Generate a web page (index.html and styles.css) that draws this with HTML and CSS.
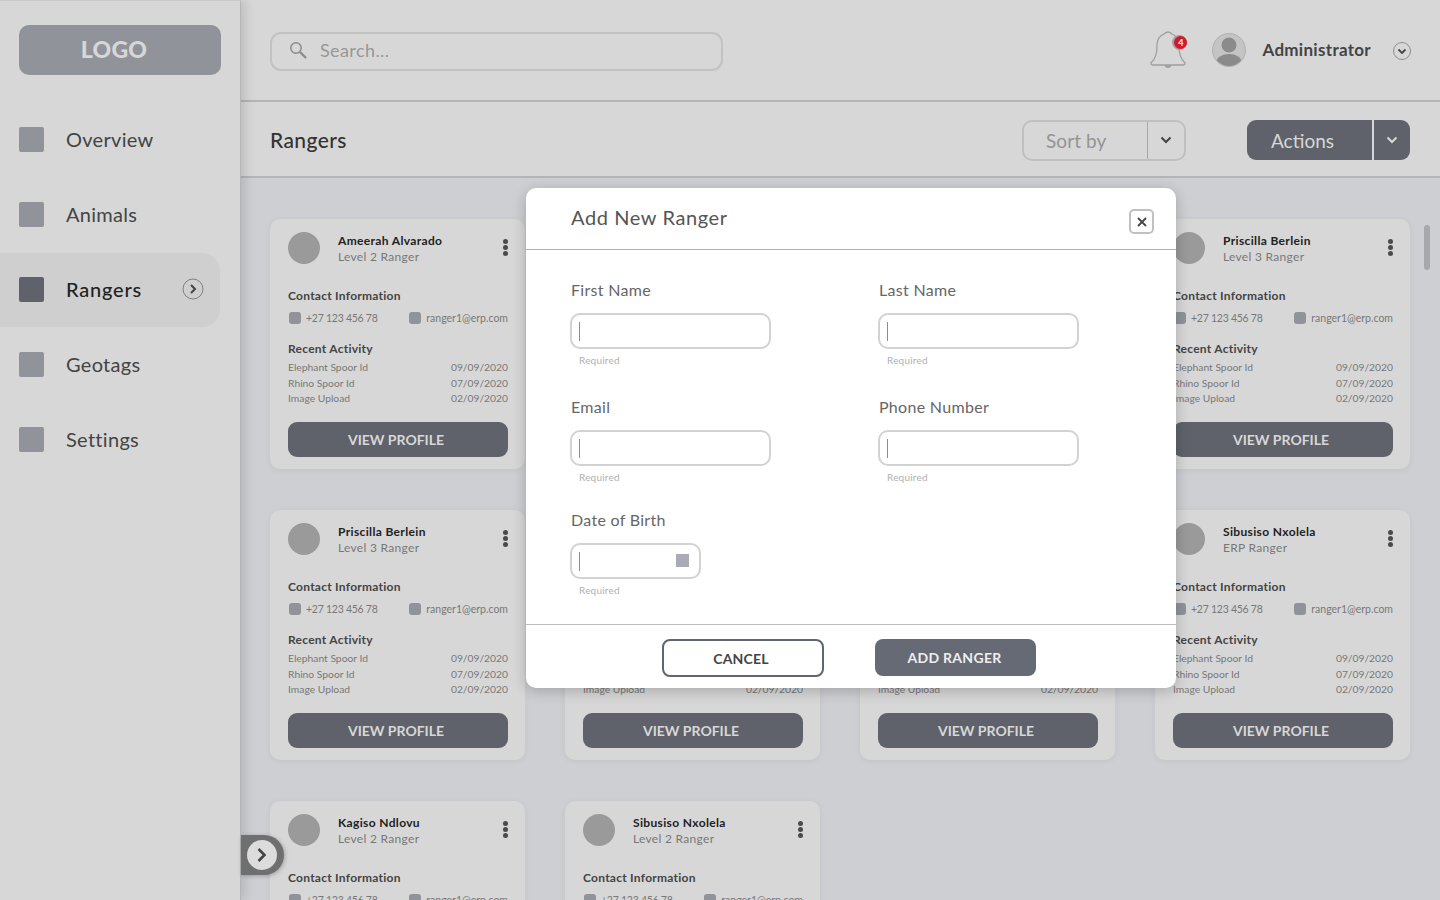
FILE: index.html
```html
<!DOCTYPE html>
<html lang="en">
  <head>
    <meta charset="UTF-8" />
    <meta name="viewport" content="width=device-width, initial-scale=1.0" />
    <title>Rangers</title>
    <link rel="stylesheet" href="styles.css">
  </head>
  <body>
    <aside class="sidebar">
      <div class="logo">LOGO</div>
      <nav class="nav">
        <a class="nav-item"><span class="nav-icon"></span>Overview</a>
        <a class="nav-item"><span class="nav-icon"></span>Animals</a>
        <a class="nav-item active"><span class="nav-icon"></span>Rangers
          <svg class="nav-arrow" viewBox="0 0 22 22" width="22" height="22"><circle cx="11" cy="11" r="10" fill="none" stroke="#808080" stroke-width="1"/><path d="M9 7l4 4-4 4" fill="none" stroke="#444" stroke-width="2"/></svg>
        </a>
        <a class="nav-item"><span class="nav-icon"></span>Geotags</a>
        <a class="nav-item"><span class="nav-icon"></span>Settings</a>
      </nav>
    </aside>

    <div class="main">
      <header class="topbar">
        <div class="search">
          <svg viewBox="0 0 18 18" width="18" height="18"><circle cx="7" cy="7" r="5.2" fill="none" stroke="#8a8a8a" stroke-width="1.5"/><path d="M11 11l6 6" stroke="#8a8a8a" stroke-width="2.4"/></svg>
          <span>Search...</span>
        </div>
        <div class="bell">
          <svg viewBox="0 0 36 40" width="36" height="40"><path d="M18 1c2 0 3 1 4 2 5 2 7 6 7 11 0 8 1 13 6 18 0 2-1 2-2 2H3c-1 0-2 0-2-2 5-5 6-10 6-18 0-5 2-9 7-11 1-1 2-2 4-2z" fill="none" stroke="#a0a0a0" stroke-width="1.3"/><path d="M14.500 34h7c0 4-7 4-7 0z" fill="#a0a0a0"/></svg>
          <span class="badge">4</span>
        </div>
        <svg class="user-pic" viewBox="0 0 34 34" width="34" height="34"><defs><clipPath id="userClip"><circle cx="17" cy="17" r="16"/></clipPath></defs><circle cx="17" cy="17" r="16.500" fill="#c4c4c4" stroke="#b0b0b0"/><g clip-path="url(#userClip)" fill="#8b8b8b"><circle cx="17" cy="12" r="7.500"/><ellipse cx="17" cy="29" rx="12.500" ry="8"/></g></svg>
        <span class="user-name">Administrator</span>
        <svg class="user-arrow" viewBox="0 0 18 18" width="18" height="18"><circle cx="9" cy="9" r="8.500" fill="none" stroke="#8f8f8f"/><path d="M5.500 7.500L9 11l3.500-3.500" fill="none" stroke="#444" stroke-width="1.800"/></svg>
      </header>

      <div class="subbar">
        <h1>Rangers</h1>
        <div class="sort">
          <span class="sort-label">Sort by</span>
          <span class="sort-arrow"><svg viewBox="0 0 12 8" width="12" height="8"><path d="M1.500 1.500L6 6l4.500-4.500" fill="none" stroke="#444" stroke-width="2"/></svg></span>
        </div>
        <div class="actions">
          <span class="actions-label">Actions</span>
          <span class="actions-arrow"><svg viewBox="0 0 12 8" width="12" height="8"><path d="M1.500 1.500L6 6l4.500-4.500" fill="none" stroke="#d7d7d7" stroke-width="2"/></svg></span>
        </div>
      </div>

      <div class="content">
        <div class="grid">
          <div class="card">
            <div class="card-top"><span class="avatar"></span><div class="who"><strong>Ameerah Alvarado</strong><span>Level 2 Ranger</span></div><span class="kebab"><i></i><i></i><i></i></span></div>
            <h3>Contact Information</h3>
            <div class="contact"><span><i></i>+27 123 456 78</span><span><i></i>ranger1@erp.com</span></div>
            <h3 class="recent">Recent Activity</h3>
            <div class="activity"><p><span>Elephant Spoor Id</span><span>09/09/2020</span></p><p><span>Rhino Spoor Id</span><span>07/09/2020</span></p><p><span>Image Upload</span><span>02/09/2020</span></p></div>
            <button class="view">VIEW PROFILE</button>
          </div>
          <div class="card">
            <div class="card-top"><span class="avatar"></span><div class="who"><strong>Kagiso Ndlovu</strong><span>Level 2 Ranger</span></div><span class="kebab"><i></i><i></i><i></i></span></div>
            <h3>Contact Information</h3>
            <div class="contact"><span><i></i>+27 123 456 78</span><span><i></i>ranger1@erp.com</span></div>
            <h3 class="recent">Recent Activity</h3>
            <div class="activity"><p><span>Elephant Spoor Id</span><span>09/09/2020</span></p><p><span>Rhino Spoor Id</span><span>07/09/2020</span></p><p><span>Image Upload</span><span>02/09/2020</span></p></div>
            <button class="view">VIEW PROFILE</button>
          </div>
          <div class="card">
            <div class="card-top"><span class="avatar"></span><div class="who"><strong>Sibusiso Nxolela</strong><span>Level 2 Ranger</span></div><span class="kebab"><i></i><i></i><i></i></span></div>
            <h3>Contact Information</h3>
            <div class="contact"><span><i></i>+27 123 456 78</span><span><i></i>ranger1@erp.com</span></div>
            <h3 class="recent">Recent Activity</h3>
            <div class="activity"><p><span>Elephant Spoor Id</span><span>09/09/2020</span></p><p><span>Rhino Spoor Id</span><span>07/09/2020</span></p><p><span>Image Upload</span><span>02/09/2020</span></p></div>
            <button class="view">VIEW PROFILE</button>
          </div>
          <div class="card">
            <div class="card-top"><span class="avatar"></span><div class="who"><strong>Priscilla Berlein</strong><span>Level 3 Ranger</span></div><span class="kebab"><i></i><i></i><i></i></span></div>
            <h3>Contact Information</h3>
            <div class="contact"><span><i></i>+27 123 456 78</span><span><i></i>ranger1@erp.com</span></div>
            <h3 class="recent">Recent Activity</h3>
            <div class="activity"><p><span>Elephant Spoor Id</span><span>09/09/2020</span></p><p><span>Rhino Spoor Id</span><span>07/09/2020</span></p><p><span>Image Upload</span><span>02/09/2020</span></p></div>
            <button class="view">VIEW PROFILE</button>
          </div>
          <div class="card">
            <div class="card-top"><span class="avatar"></span><div class="who"><strong>Priscilla Berlein</strong><span>Level 3 Ranger</span></div><span class="kebab"><i></i><i></i><i></i></span></div>
            <h3>Contact Information</h3>
            <div class="contact"><span><i></i>+27 123 456 78</span><span><i></i>ranger1@erp.com</span></div>
            <h3 class="recent">Recent Activity</h3>
            <div class="activity"><p><span>Elephant Spoor Id</span><span>09/09/2020</span></p><p><span>Rhino Spoor Id</span><span>07/09/2020</span></p><p><span>Image Upload</span><span>02/09/2020</span></p></div>
            <button class="view">VIEW PROFILE</button>
          </div>
          <div class="card">
            <div class="card-top"><span class="avatar"></span><div class="who"><strong>Ameerah Alvarado</strong><span>Level 2 Ranger</span></div><span class="kebab"><i></i><i></i><i></i></span></div>
            <h3>Contact Information</h3>
            <div class="contact"><span><i></i>+27 123 456 78</span><span><i></i>ranger1@erp.com</span></div>
            <h3 class="recent">Recent Activity</h3>
            <div class="activity"><p><span>Elephant Spoor Id</span><span>09/09/2020</span></p><p><span>Rhino Spoor Id</span><span>07/09/2020</span></p><p><span>Image Upload</span><span>02/09/2020</span></p></div>
            <button class="view">VIEW PROFILE</button>
          </div>
          <div class="card">
            <div class="card-top"><span class="avatar"></span><div class="who"><strong>Kagiso Ndlovu</strong><span>Level 2 Ranger</span></div><span class="kebab"><i></i><i></i><i></i></span></div>
            <h3>Contact Information</h3>
            <div class="contact"><span><i></i>+27 123 456 78</span><span><i></i>ranger1@erp.com</span></div>
            <h3 class="recent">Recent Activity</h3>
            <div class="activity"><p><span>Elephant Spoor Id</span><span>09/09/2020</span></p><p><span>Rhino Spoor Id</span><span>07/09/2020</span></p><p><span>Image Upload</span><span>02/09/2020</span></p></div>
            <button class="view">VIEW PROFILE</button>
          </div>
          <div class="card">
            <div class="card-top"><span class="avatar"></span><div class="who"><strong>Sibusiso Nxolela</strong><span>ERP Ranger</span></div><span class="kebab"><i></i><i></i><i></i></span></div>
            <h3>Contact Information</h3>
            <div class="contact"><span><i></i>+27 123 456 78</span><span><i></i>ranger1@erp.com</span></div>
            <h3 class="recent">Recent Activity</h3>
            <div class="activity"><p><span>Elephant Spoor Id</span><span>09/09/2020</span></p><p><span>Rhino Spoor Id</span><span>07/09/2020</span></p><p><span>Image Upload</span><span>02/09/2020</span></p></div>
            <button class="view">VIEW PROFILE</button>
          </div>
          <div class="card">
            <div class="card-top"><span class="avatar"></span><div class="who"><strong>Kagiso Ndlovu</strong><span>Level 2 Ranger</span></div><span class="kebab"><i></i><i></i><i></i></span></div>
            <h3>Contact Information</h3>
            <div class="contact"><span><i></i>+27 123 456 78</span><span><i></i>ranger1@erp.com</span></div>
          </div>
          <div class="card">
            <div class="card-top"><span class="avatar"></span><div class="who"><strong>Sibusiso Nxolela</strong><span>Level 2 Ranger</span></div><span class="kebab"><i></i><i></i><i></i></span></div>
            <h3>Contact Information</h3>
            <div class="contact"><span><i></i>+27 123 456 78</span><span><i></i>ranger1@erp.com</span></div>
          </div>
        </div>
      </div>
    </div>

    <div class="scroll-thumb"></div>

    <!-- sidebar collapse handle -->
    <div class="collapse">
      <span><svg viewBox="0 0 12 16" width="12" height="16"><path d="M2.500 2l6 6-6 6" fill="none" stroke="#444" stroke-width="2.600"/></svg></span>
    </div>

    <div class="modal">
      <div class="modal-head">
        <h2>Add New Ranger</h2>
        <span class="close"><svg viewBox="0 0 10 10" width="10" height="10"><path d="M1 1l8 8M9 1l-8 8" stroke="#444" stroke-width="1.800"/></svg></span>
      </div>
      <div class="modal-body">
        <div class="field">
          <label>First Name</label>
          <div class="input"></div>
          <small>Required</small>
        </div>
        <div class="field">
          <label>Last Name</label>
          <div class="input"></div>
          <small>Required</small>
        </div>
        <div class="field">
          <label>Email</label>
          <div class="input"></div>
          <small>Required</small>
        </div>
        <div class="field">
          <label>Phone Number</label>
          <div class="input"></div>
          <small>Required</small>
        </div>
        <div class="field dob">
          <label>Date of Birth</label>
          <div class="input date"><span class="cal"></span></div>
          <small>Required</small>
        </div>
      </div>
      <div class="modal-foot">
        <button class="cancel">CANCEL</button>
        <button class="add">ADD RANGER</button>
      </div>
    </div>
  </body>
</html>
```

FILE: styles.css
```css
:root {
  --panel: #d7d7d7;
  --bg: #cdcfd3;
  --line: #b4b5b6;
  --dark: #5f626a;
  --square: #90939a;
}

* {
  box-sizing: border-box;
}

body {
  margin: 0;
  height: 900px;
  overflow: hidden;
  display: flex;
  background: var(--bg);
  color: #333;
  font-family: "Lato", "Noto Sans", sans-serif;
}

/* sidebar */
.sidebar {
  width: 241px;
  flex-shrink: 0;
  background: var(--panel);
  border-top: 1px solid #c8c8c8;
  border-right: 1px solid var(--line);
  padding-top: 24px;
  box-shadow: 4px 0 10px rgba(0, 0, 0, 0.12);
  position: relative;
  z-index: 2;
}

.logo {
  width: 202px;
  height: 50px;
  margin-left: 19px;
  padding: 0 12px 2px 0;
  display: flex;
  align-items: center;
  justify-content: center;
  background: var(--square);
  border-radius: 10px;
  color: #d7d7d7;
  font-size: 23px;
  font-weight: 900;
  letter-spacing: 0.3px;
}

.nav {
  margin-top: 28px;
  display: flex;
  flex-direction: column;
  gap: 1px;
}

.nav-item {
  width: 220px;
  height: 74px;
  display: flex;
  align-items: center;
  padding: 0 0 2px 19px;
  font-size: 20px;
  letter-spacing: 0.3px;
  color: #444;
  border-radius: 0 18px 18px 0;
}

.nav-icon {
  width: 25px;
  height: 25px;
  margin-right: 22px;
  background: var(--square);
  border-radius: 2px;
}

.nav-item.active {
  background: #cfcfcf;
  color: #222;
  font-weight: 500;
  letter-spacing: 0.8px;
}

.nav-item.active .nav-icon {
  background: var(--dark);
}

.nav-arrow {
  margin-left: auto;
  margin-right: 16px;
}

/* main */
.main {
  flex: 1;
  min-width: 0;
}

.topbar {
  height: 102px;
  background: var(--panel);
  border-bottom: 2px solid var(--line);
  display: flex;
  align-items: center;
  padding: 2px 29px 0 29px;
}

.search {
  width: 453px;
  height: 39px;
  display: flex;
  align-items: center;
  gap: 13px;
  padding: 0 0 3px 17px;
  border: 2px solid #c2c2c2;
  border-radius: 11px;
  color: #979797;
  font-size: 18px;
  letter-spacing: 0.4px;
}

.bell {
  position: relative;
  margin-left: auto;
  margin-right: 26px;
  height: 40px;
}

.badge {
  position: absolute;
  top: 5px;
  right: -1px;
  width: 13px;
  height: 13px;
  border-radius: 50%;
  background: #d3182b;
  box-shadow: -1px 0 0 1px #a0a0a0;
  color: #e8e8e8;
  font-size: 9px;
  font-weight: 900;
  line-height: 13px;
  text-align: center;
}

.user-pic {
  margin-top: -3px;
}

.user-name {
  margin: -3px 0 0 16px;
  font-size: 17px;
  font-weight: 700;
  color: #444;
  letter-spacing: 0.3px;
}

.user-arrow {
  margin-left: 22px;
}

.subbar {
  height: 76px;
  background: var(--panel);
  border-bottom: 2px solid var(--line);
  display: flex;
  align-items: center;
  padding: 0 30px 0 29px;
}

.subbar h1 {
  margin: 0 auto 0 0;
  font-size: 21px;
  font-weight: 500;
  color: #333;
  letter-spacing: 0.4px;
}

.sort {
  width: 164px;
  height: 41px;
  margin-top: 2px;
  display: flex;
  border: 2px solid #bfbfbf;
  border-radius: 10px;
  color: #949494;
  font-size: 19px;
  letter-spacing: 0.1px;
}

.sort-label {
  width: 124px;
  padding-left: 22px;
  line-height: 37px;
  border-right: 1px solid #a8a8a8;
}

.sort-arrow {
  flex: 1;
  display: flex;
  align-items: center;
  justify-content: center;
}

.actions {
  width: 163px;
  height: 40px;
  margin: 2px 0 0 61px;
  display: flex;
  gap: 2px;
  color: #d7d7d7;
  font-size: 19px;
}

.actions-label {
  width: 125px;
  padding-left: 24px;
  line-height: 41px;
  background: var(--dark);
  border-radius: 9px 0 0 9px;
}

.actions-arrow {
  flex: 1;
  display: flex;
  align-items: center;
  justify-content: center;
  background: var(--dark);
  border-radius: 0 9px 9px 0;
}

.content {
  padding: 41px 0 0 29px;
}

.grid {
  display: grid;
  grid-template-columns: repeat(4, 255px);
  gap: 41px 40px;
}

.scroll-thumb {
  position: absolute;
  left: 1424px;
  top: 225px;
  width: 6px;
  height: 45px;
  border-radius: 3px;
  background: #a6a8ac;
}

/* ranger cards */
.card {
  height: 250px;
  padding: 13px 17px 0 18px;
  background: var(--panel);
  border-radius: 10px;
  box-shadow: 0 1px 6px rgba(0, 0, 0, 0.06);
}

.card-top {
  height: 32px;
  display: flex;
  align-items: center;
}

.avatar {
  width: 32px;
  height: 32px;
  border-radius: 50%;
  background: #9a9a9a;
}

.who {
  margin-left: 18px;
  margin-top: 1px;
  display: flex;
  flex-direction: column;
  gap: 1px;
  font-size: 12px;
  letter-spacing: 0.3px;
  color: #777;
}

.who strong {
  font-weight: 700;
  color: #222;
  letter-spacing: 0.35px;
}

.kebab {
  margin-left: auto;
  margin-top: -1px;
  display: flex;
  flex-direction: column;
  gap: 1px;
}

.kebab i {
  width: 5px;
  height: 5px;
  border-radius: 50%;
  background: #4a4a4a;
}

.card h3 {
  margin: 24px 0 0;
  font-size: 12px;
  font-weight: 700;
  line-height: 15px;
  color: #444;
  letter-spacing: 0.25px;
}

.card h3.recent {
  margin-top: 16px;
}

.contact {
  margin-top: 8px;
  display: flex;
  justify-content: space-between;
  padding-left: 1px;
  font-size: 10.500px;
  line-height: 14px;
  color: #777;
}

.contact span {
  display: flex;
  align-items: center;
  gap: 5px;
}

.contact span:first-child {
  letter-spacing: -0.25px;
}

.contact i {
  width: 12px;
  height: 12px;
  border-radius: 3px;
  background: var(--square);
}

.activity {
  margin-top: 4px;
  font-size: 10.300px;
  line-height: 15.500px;
  color: #777;
}

.activity p {
  margin: 0;
  display: flex;
  justify-content: space-between;
}

.view {
  width: 220px;
  height: 35px;
  margin-top: 15px;
  padding: 0 4px 0 0;
  border: none;
  border-radius: 9px;
  background: var(--dark);
  color: #d7d7d7;
  font-family: inherit;
  font-size: 14px;
  font-weight: 700;
}

/* collapse handle */
.collapse {
  position: absolute;
  left: 241px;
  top: 835px;
  width: 43px;
  height: 40px;
  display: flex;
  align-items: center;
  padding-left: 6px;
  background: #6f6f6f;
  border-radius: 0 20px 20px 0;
  z-index: 3;
  box-shadow: 1px 1px 4px rgba(0, 0, 0, 0.25);
}

.collapse span {
  width: 30px;
  height: 30px;
  display: flex;
  align-items: center;
  justify-content: center;
  background: #dcdcdc;
  border-radius: 50%;
}

/* modal */
.modal {
  position: absolute;
  left: 526px;
  top: 188px;
  width: 650px;
  height: 500px;
  display: flex;
  flex-direction: column;
  background: #fff;
  border-radius: 10px;
  box-shadow: 0 3px 14px rgba(0, 0, 0, 0.22);
  z-index: 5;
}

.modal-head {
  height: 62px;
  flex-shrink: 0;
  display: flex;
  align-items: flex-start;
  justify-content: space-between;
  padding: 17px 22px 0 45px;
  border-bottom: 1px solid #b0b0b0;
}

.modal-head h2 {
  margin: 0;
  font-size: 20px;
  font-weight: 400;
  line-height: 24px;
  color: #555;
  letter-spacing: 0.6px;
}

.close {
  width: 25px;
  height: 25px;
  margin-top: 4px;
  display: flex;
  align-items: center;
  justify-content: center;
  border: 2px solid #c0c0c0;
  border-radius: 5px;
}

.modal-body {
  flex: 1;
  min-height: 0;
  display: grid;
  grid-template-columns: 308px 308px;
  grid-auto-rows: 117px;
  padding: 30px 0 0 45px;
}

.field label {
  display: block;
  font-size: 16px;
  line-height: 20px;
  color: #666;
  letter-spacing: 0.3px;
}

.input {
  position: relative;
  width: 201px;
  height: 36px;
  margin: 13px 0 0 -1px;
  border: 2px solid #d2d2d2;
  border-radius: 10px;
}

/* text caret */
.input::before {
  content: "";
  position: absolute;
  left: 7px;
  top: 7px;
  width: 1px;
  height: 19px;
  background: #8c8c8c;
}

.input.date {
  width: 131px;
}

.cal {
  position: absolute;
  right: 10px;
  top: 9px;
  width: 13px;
  height: 13px;
  background: #a9acb4;
}

.field small {
  display: block;
  margin: 5px 0 0 8px;
  font-size: 10px;
  line-height: 12px;
  color: #b0b0b0;
  letter-spacing: 0.2px;
}

.dob {
  margin-top: -4px;
}

.modal-foot {
  height: 64px;
  flex-shrink: 0;
  display: flex;
  padding: 14px 0 0 136px;
  gap: 51px;
  border-top: 1px solid #bdbdbd;
}

.modal-foot button {
  padding: 0 4px 0 0;
  font-family: inherit;
  font-size: 14px;
  font-weight: 700;
  letter-spacing: 0.2px;
  border-radius: 8px;
}

.cancel {
  width: 162px;
  height: 38px;
  background: #fff;
  color: #444;
  border: 2px solid #5f6670;
}

.modal-foot .add {
  width: 161px;
  height: 37px;
  padding-right: 2px;
  background: #666a75;
  color: #eee;
  border: none;
  letter-spacing: 0.3px;
}
```
